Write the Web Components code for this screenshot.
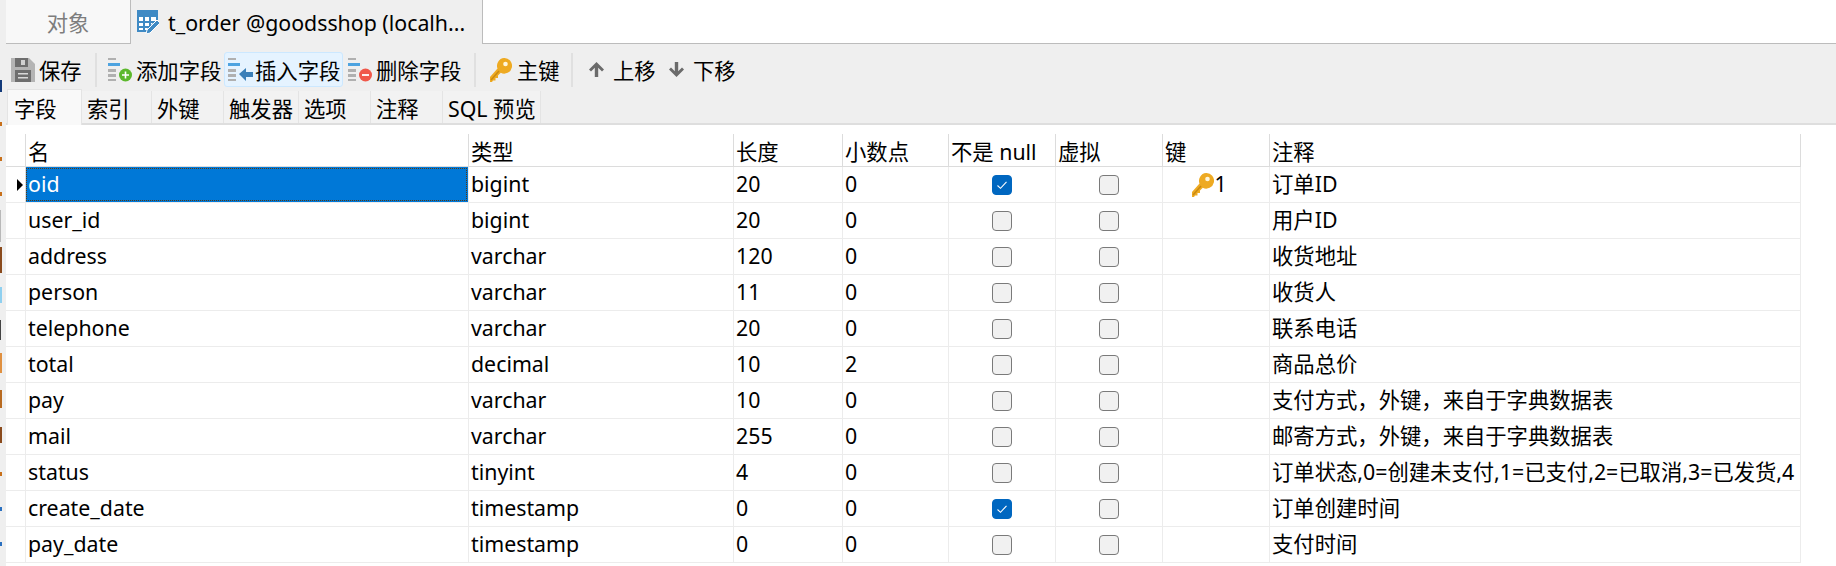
<!DOCTYPE html>
<html><head><meta charset="utf-8">
<style>
html,body{margin:0;padding:0;background:#efefef;overflow:hidden}
body{width:1836px;height:566px;font:21.33px "Noto Sans","Noto Sans CJK SC",sans-serif;color:#000}
</style></head><body>
<app-window></app-window>
<script>
const ICONS={
save:`<svg width="24" height="24" viewBox="0 0 24 24"><path d="M0 0H18L24 6V24H0Z" fill="#b4b4b4"/><path d="M4 0H17V9H4Z" fill="#6e6e6e"/><path d="M10 2H14V7H10Z" fill="#d0d0d0"/><path d="M4 12H20V24H4Z" fill="#6e6e6e"/><path d="M7 15H17V16.500H7ZM7 19H17V20.500H7Z" fill="#d8d8d8"/></svg>`,
table:`<svg width="22" height="24" viewBox="0 0 22 24"><path d="M0 0H21V13L12 22H0Z" fill="#3f8ac4"/><path d="M2 7H6V11H2ZM8 7H12V11H8ZM14 7H19V11H14ZM2 13H6V16H2ZM8 13H12V16H8ZM14 13H16L13 16H14ZM2 18H6V20H2ZM8 18H11L10 20H8Z" fill="#fff"/><path d="M20 10L23 13 13 23 9 24 10 20Z" fill="#3f8ac4" stroke="#fff" stroke-width="1"/></svg>`,
add:`<svg width="26" height="24" viewBox="0 0 26 24"><path d="M0 0H8V2H0Z" fill="#b0b0b0"/><path d="M0 5H12V8H0Z" fill="#4da3e0"/><path d="M0 11H8V14H0ZM0 16H8V19H0ZM0 21H8V23H0Z" fill="#b0b0b0"/><circle cx="17.500" cy="17" r="6.500" fill="#5cb82c"/><path d="M14 17H21M17.500 13.500V20.500" stroke="#fff" stroke-width="1.600"/></svg>`,
del:`<svg width="26" height="24" viewBox="0 0 26 24"><path d="M0 0H8V2H0Z" fill="#b0b0b0"/><path d="M0 5H12V8H0Z" fill="#4da3e0"/><path d="M0 11H8V14H0ZM0 16H8V19H0ZM0 21H8V23H0Z" fill="#b0b0b0"/><circle cx="17.500" cy="17" r="6.500" fill="#f0584a"/><path d="M14 17H21" stroke="#fff" stroke-width="1.800"/></svg>`,
ins:`<svg width="26" height="24" viewBox="0 0 26 24"><path d="M0 0H8V2H0Z" fill="#b0b0b0"/><path d="M0 5H12V8H0Z" fill="#4da3e0"/><path d="M0 11H8V14H0ZM0 16H8V19H0ZM0 21H8V23H0Z" fill="#b0b0b0"/><path d="M11 16L18 10V14H25V19H18V23Z" fill="#3a7fb8"/></svg>`,
key:`<svg width="22" height="24" viewBox="0 0 22 24"><path d="M14 0A7.800 7.800 0 1 1 10.800 14.800L8 17.500V20H5.500V22.500H3L2 24H0V19L7.500 10.500A7.800 7.800 0 0 1 14 0Z" fill="#eeaa22"/><path d="M1 22L9 13" stroke="#c98a12" stroke-width="1.500"/><circle cx="15.500" cy="6" r="2.300" fill="#fff6dc"/></svg>`,
up:`<svg width="15" height="15" viewBox="0 0 15 15"><path d="M7.500 0L15 7.500 13 9.500 9.200 5.700V15H5.800V5.700L2 9.500 0 7.500Z" fill="#6b6b6b"/></svg>`,
down:`<svg width="15" height="15" viewBox="0 0 15 15"><path d="M7.500 15L15 7.500 13 5.500 9.200 9.300V0H5.800V9.300L2 5.500 0 7.500Z" fill="#6b6b6b"/></svg>`
};
function def(name,css,html,setup){
  customElements.define(name,class extends HTMLElement{
    connectedCallback(){
      if(this.shadowRoot)return;
      const r=this.attachShadow({mode:'open'});
      r.innerHTML=`<style>${css}</style>`+(typeof html==='function'?html(this):html);
      if(setup)setup(r,this);
    }
  });
}
def('doc-tab',`:host{display:flex;align-items:center;box-sizing:border-box;height:44px;white-space:nowrap}
:host([kind=idle]){width:125px;background:#f8f8f8;border-right:1px solid #bcbcbc;border-bottom:1px solid #bcbcbc;color:#7d7d7d;justify-content:center}
:host([kind=on]){width:351px;background:#efefef;padding-left:6px;gap:9px}
svg{flex:none}`,
 h=>(h.getAttribute('kind')==='on'?ICONS.table:'')+'<slot></slot>');
def('doc-tabs',`:host{display:flex;height:44px}
.rest{flex:1;background:#fff;border-left:1px solid #bcbcbc;border-bottom:1px solid #bcbcbc;box-sizing:border-box}`,
 `<slot></slot><div class="rest"></div>`);
def('tool-btn',`:host{display:flex;align-items:center;box-sizing:border-box;height:35px;white-space:nowrap;border:1px solid transparent;border-radius:3px;flex:none}
:host([hot]){background:#e5f3ff;border-color:#cce8ff}
svg{flex:none}`,
 h=>(ICONS[h.getAttribute('icon')]||'')+'<slot></slot>',(r,h)=>{
  h.style.gap=(h.getAttribute('gap')||'4')+'px';
  h.style.paddingLeft=(h.getAttribute('pl')||0)+'px';
  h.style.width=h.getAttribute('w')+'px';
 });
def('tool-sep',`:host{display:block;width:2px;height:34px;background:#e0e0e0;flex:none}`,``);
def('tool-bar',`:host{display:flex;align-items:center;height:46px;padding-top:5px;box-sizing:border-box;background:#efefef}`,`<slot></slot>`);
def('sub-tab',`:host{display:flex;align-items:center;box-sizing:border-box;height:32px;padding-left:5px;background:#f2f2f2;border-right:1px solid #e4e4e4;white-space:nowrap;flex:none}
:host([on]){background:#f9f9f9;height:36px;margin-top:-2px;border:1px solid #e4e4e4;border-bottom:none;padding-left:6px}`,`<slot></slot>`,
 (r,h)=>{h.style.width=h.getAttribute('w')+'px'});
def('sub-tabs',`:host{display:flex;height:35px;box-sizing:border-box;border-bottom:2px solid #dedede;padding-left:1px;align-items:flex-start;background:#efefef;padding-top:1px}`,`<slot></slot>`);
const COLS='19px 443px 265px 109px 106px 107px 107px 107px 531px';
def('grid-cell',`:host{display:flex;align-items:center;box-sizing:border-box;overflow:hidden;white-space:nowrap;padding:0 0 3px 2px;border-left:1px solid #ececec;min-width:0}
:host([first]){border-left:none;padding:0}
:host([head]){border-left-color:#dcdcdc;padding-bottom:0}
:host([note]){padding-bottom:5px}
:host([center]){justify-content:center;padding:0 1px 0 0}
:host([sel]){background:#0078d7;color:#fff;outline:1px dotted #5a3a10;outline-offset:-2px;border-left-color:#dcdcdc}
.arrow{width:0;height:0;border-left:6px solid #000;border-top:6px solid transparent;border-bottom:6px solid transparent;margin-left:11px}`,
 h=>h.hasAttribute('arrow')?'<div class="arrow"></div>':'<slot></slot>');
def('check-box',`:host{display:block;box-sizing:border-box;width:20px;height:20px;border-radius:4px;border:1px solid #7a7a7a;background:#f1f1f1}
:host([on]){background:#0067c0;border-color:#0067c0}
svg{display:block}`,
 h=>h.hasAttribute('on')?`<svg width="18" height="18" viewBox="0 0 18 18"><path d="M4.500 9.500L7.500 12.300 13.500 5.800" fill="none" stroke="#fff" stroke-width="1.100"/></svg>`:'');
def('key-mark',`:host{display:flex;align-items:center;gap:0;margin-left:-12px}
span{padding-bottom:3px}`,h=>ICONS.key+'<span><slot></slot></span>');
def('grid-row',`:host{display:grid;grid-template-columns:${COLS};height:36px;box-sizing:border-box;border-bottom:1px solid #ececec;border-right:1px solid #ececec;width:1795px}
:host([head]){border-bottom-color:#dcdcdc;border-right-color:#dcdcdc;height:33px}`,`<slot></slot>`);
const ROWS=[
['oid','bigint','20','0',1,0,1,'订单ID'],
['user_id','bigint','20','0',0,0,0,'用户ID'],
['address','varchar','120','0',0,0,0,'收货地址'],
['person','varchar','11','0',0,0,0,'收货人'],
['telephone','varchar','20','0',0,0,0,'联系电话'],
['total','decimal','10','2',0,0,0,'商品总价'],
['pay','varchar','10','0',0,0,0,'支付方式，外键，来自于字典数据表'],
['mail','varchar','255','0',0,0,0,'邮寄方式，外键，来自于字典数据表'],
['status','tinyint','4','0',0,0,0,'订单状态,0=创建未支付,1=已支付,2=已取消,3=已发货,4'],
['create_date','timestamp','0','0',1,0,0,'订单创建时间'],
['pay_date','timestamp','0','0',0,0,0,'支付时间']];
def('field-grid',`:host{display:block;background:#fff;height:441px;padding:9px 0 0 0;box-sizing:border-box}`,
 ()=>{
  const head=['名','类型','长度','小数点','不是 null','虚拟','键','注释'];
  let s=`<grid-row head><grid-cell first></grid-cell>${head.map(t=>`<grid-cell head>${t}</grid-cell>`).join('')}</grid-row>`;
  ROWS.forEach((r,i)=>{
   s+=`<grid-row><grid-cell first ${i==0?'arrow':''}></grid-cell>
   <grid-cell ${i==0?'sel':''}>${r[0]}</grid-cell><grid-cell>${r[1]}</grid-cell><grid-cell>${r[2]}</grid-cell><grid-cell>${r[3]}</grid-cell>
   <grid-cell center><check-box ${r[4]?'on':''}></check-box></grid-cell>
   <grid-cell center><check-box ${r[5]?'on':''}></check-box></grid-cell>
   <grid-cell center>${r[6]?'<key-mark>1</key-mark>':''}</grid-cell>
   <grid-cell note>${r[7]}</grid-cell></grid-row>`;
  });
  return s;
 });
/* the 6px edge left of the window, where slivers of whatever lies behind it show */
const MARKS=[[80,12,2,'#123a7a'],[122,4,2,'#c8701a'],[157,4,2,'#c8701a'],[192,4,2,'#c8701a'],[210,32,1,'#b8b8b8'],[247,26,2,'#8a4a1c'],[287,16,2,'#8fd0f0'],[320,20,1,'#444'],[353,20,2,'#e09040'],[390,18,2,'#b86a20'],[427,16,2,'#8a4a1c'],[472,4,2,'#c8701a'],[507,4,2,'#2a70c0'],[542,4,2,'#2a70c0']];
def('edge-strip',`:host{display:block;width:6px;height:566px;flex:none;overflow:hidden}
i{display:block}`,
 ()=>{let y=0,s='';MARKS.forEach(m=>{s+=`<i style="margin-top:${m[0]-y}px;height:${m[1]}px;width:${m[2]}px;background:${m[3]}"></i>`;y=m[0]+m[1]});return s});
def('app-window',`:host{display:flex;width:1836px;height:566px;box-sizing:border-box;background:#efefef}
main{display:block;flex:1;min-width:0}`,
`<edge-strip></edge-strip><main><doc-tabs><doc-tab kind="idle">对象</doc-tab><doc-tab kind="on">t_order @goodsshop (localh...</doc-tab></doc-tabs>
<tool-bar>
<tool-btn icon="save" gap="4" pl="4" w="89">保存</tool-btn><tool-sep></tool-sep>
<tool-btn icon="add" gap="2" pl="10" w="127">添加字段</tool-btn>
<tool-btn icon="ins" gap="1" pl="3" hot w="119">插入字段</tool-btn>
<tool-btn icon="del" gap="2" pl="4" w="131">删除字段</tool-btn><tool-sep></tool-sep>
<tool-btn icon="key" gap="5" pl="13" w="95">主键</tool-btn><tool-sep></tool-sep>
<tool-btn icon="up" gap="9" pl="15" w="91">上移</tool-btn>
<tool-btn icon="down" gap="9" pl="4" w="80">下移</tool-btn>
</tool-bar>
<sub-tabs><sub-tab on w="75">字段</sub-tab><sub-tab w="70">索引</sub-tab><sub-tab w="72">外键</sub-tab><sub-tab w="75">触发器</sub-tab><sub-tab w="72">选项</sub-tab><sub-tab w="72">注释</sub-tab><sub-tab w="98">SQL 预览</sub-tab></sub-tabs>
<field-grid></field-grid></main>`);
</script></body></html>
